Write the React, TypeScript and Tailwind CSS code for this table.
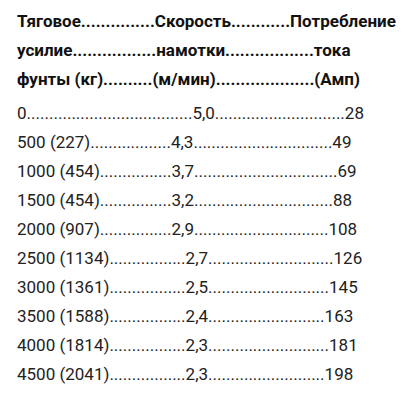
import React from "react";

const d = (n: number) => ".".repeat(n);

const headers: [string, number, string, number, string][] = [
  ["Тяговое", 15, "Скорость", 12, "Потребление"],
  ["усилие", 17, "намотки", 18, "тока"],
  ["фунты (кг)", 10, "(м/мин)", 20, "(Амп)"],
];

const rows: [string, number, string, number, string][] = [
  ["0", 37, "5,0", 29, "28"],
  ["500 (227)", 18, "4,3", 31, "49"],
  ["1000 (454)", 16, "3,7", 32, "69"],
  ["1500 (454)", 16, "3,2", 31, "88"],
  ["2000 (907)", 16, "2,9", 30, "108"],
  ["2500 (1134)", 17, "2,7", 28, "126"],
  ["3000 (1361)", 17, "2,5", 27, "145"],
  ["3500 (1588)", 17, "2,4", 26, "163"],
  ["4000 (1814)", 17, "2,3", 27, "181"],
  ["4500 (2041)", 17, "2,3", 26, "198"],
];

export default function App() {
  return (
    <div
      className="w-[415px] h-[411px] bg-white pl-[17px] pt-[7px] whitespace-nowrap text-[17px] leading-[29px]"
      style={{ fontFamily: "Roboto, 'Noto Sans', sans-serif" }}
    >
      <div className="mb-[5px] font-bold text-[#111]">
        {headers.map((r, i) => (
          <p key={i}>{r[0] + d(r[1]) + r[2] + d(r[3]) + r[4]}</p>
        ))}
      </div>
      <div className="text-[#222]">
        {rows.map((r, i) => (
          <p key={i}>{r[0] + d(r[1]) + r[2] + d(r[3]) + r[4]}</p>
        ))}
      </div>
    </div>
  );
}
